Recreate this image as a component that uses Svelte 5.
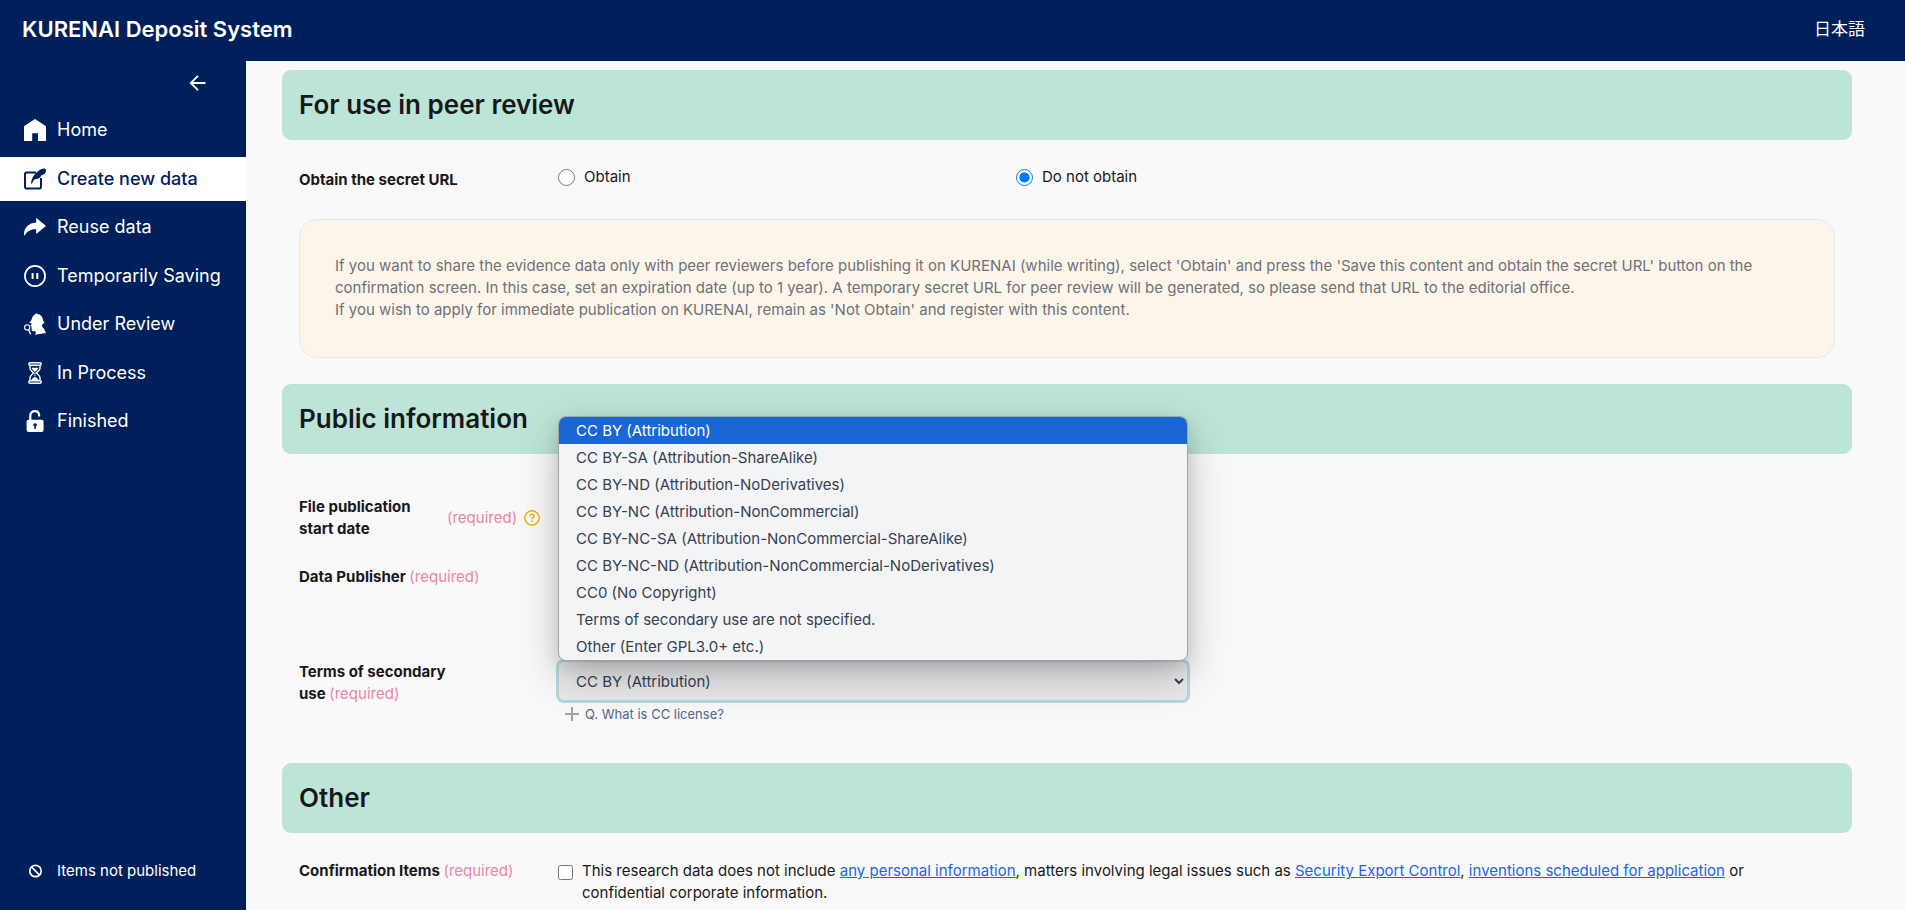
<script>
  const nav = [
    { id: 'home', label: 'Home' },
    { id: 'create', label: 'Create new data', active: true },
    { id: 'reuse', label: 'Reuse data' },
    { id: 'saving', label: 'Temporarily Saving' },
    { id: 'review', label: 'Under Review' },
    { id: 'process', label: 'In Process' },
    { id: 'finished', label: 'Finished' }
  ];

  const licenses = [
    'CC BY (Attribution)',
    'CC BY-SA (Attribution-ShareAlike)',
    'CC BY-ND (Attribution-NoDerivatives)',
    'CC BY-NC (Attribution-NonCommercial)',
    'CC BY-NC-SA (Attribution-NonCommercial-ShareAlike)',
    'CC BY-NC-ND (Attribution-NonCommercial-NoDerivatives)',
    'CC0 (No Copyright)',
    'Terms of secondary use are not specified.',
    'Other (Enter GPL3.0+ etc.)'
  ];

  let license = $state(licenses[0]);
  let listOpen = $state(true);
  let secret = $state('no');

  function choose(value) {
    license = value;
    listOpen = false;
  }
</script>

<header class="topbar">
  <a class="brand" href="#top">KURENAI Deposit System</a>
  <a class="lang" href="#ja" lang="ja">日本語</a>
</header>

<div class="layout">
  <aside class="sidebar">
    <button class="collapse" aria-label="Collapse menu">
      <svg viewBox="0 0 18 18" width="18" height="18" fill="none" stroke="currentColor" stroke-width="1.9"><path d="M16.5 9H2M9 1.8 1.8 9 9 16.2" /></svg>
    </button>
    <nav class="menu">
      {#each nav as item (item.id)}
        <a class="item" class:active={item.active} href={'#' + item.id}>
          <svg class="icon" viewBox="0 0 22 22" width="22" height="22" fill="currentColor" aria-hidden="true">
            {#if item.id === 'home'}
              <path d="M11 0 22 7.3V22H14V14.2H8.2V22H0V7.3Z" />
            {:else if item.id === 'create'}
              <path d="M12 4.5H2.8Q1 4.500 1 6.300V18.700Q1 20.500 2.800 20.500H15.200Q17 20.500 17 18.700V10" fill="none" stroke="currentColor" stroke-width="2" />
              <path d="M7 15.400C7.300 10.500 9.800 6.500 14 3.200 16.500 1.200 17.500.4 20 .4 21.300.4 22 1.200 22 2.300 22 5.200 20.300 6.800 17.600 7.200 16.400 9.700 13.800 11.100 10.300 11.500L7.900 15.400Z" />
            {:else if item.id === 'reuse'}
              <path d="M12.200 1.800 22 10 12.200 17.900V13.300C7.300 13.200 3.200 15 .9 19.300H0C-.2 11.900 4.300 7.200 12.200 6.600Z" />
            {:else if item.id === 'saving'}
              <circle cx="11" cy="11" r="10.100" fill="none" stroke="currentColor" stroke-width="1.700" />
              <path d="M7.600 8h2v6h-2zM12.300 8h2v6h-2z" />
            {:else if item.id === 'review'}
              <path d="M11.300 1.200C11.800.2 12.600.1 13.300.9 16.700 1.200 18.700 3.600 19 7L20.500 10.200 18.600 10.700 17.900 13.400 19.800 15.500 22 20 11 21.800 11.900 19.200 11.200 18.300H8.800C7.700 18.300 7.300 17.400 7.700 16.300L7.500 13.600 6.400 12.800 7.900 10.500 5.200 9.800C6.100 8.700 7.200 7.600 7.800 5.900 8.300 3.400 9.500 1.900 11.300 1.200Z" />
              <circle cx="3.200" cy="14.400" r="2.600" fill="none" stroke="currentColor" stroke-width="1.100" />
              <path d="M4.600 16.700 6.600 21.300" fill="none" stroke="currentColor" stroke-width="1.400" />
            {:else if item.id === 'process'}
              <rect x="4.800" y=".8" width="12.400" height="2.400" rx="1.200" fill="none" stroke="currentColor" stroke-width="1.400" />
              <rect x="4.800" y="18.800" width="12.400" height="2.400" rx="1.200" fill="none" stroke="currentColor" stroke-width="1.400" />
              <path d="M6 3.500V6.300Q6 8 9.700 11 6 14 6 15.700V18.500M16 3.500V6.300Q16 8 12.300 11 16 14 16 15.700V18.500" fill="none" stroke="currentColor" stroke-width="1.400" />
              <path d="M7.600 5.800H14.400Q13.800 7.900 11 10 8.200 7.900 7.600 5.800ZM11 15Q13.600 15.600 14.500 18H7.500Q8.400 15.600 11 15ZM10.400 11h1.200v1.200h-1.200zM10.400 13h1.200v1.200h-1.200z" />
            {:else}
              <path d="M6.300 10V5.600C6.300 2.800 8.200 1.200 10.700 1.200S15.100 2.800 15.100 5.600V6.600" fill="none" stroke="currentColor" stroke-width="2.200" />
              <path fill-rule="evenodd" d="M4.500 9.800H17.700Q19.600 9.800 19.600 11.700V20.100Q19.600 22 17.700 22H4.500Q2.600 22 2.600 20.100V11.700Q2.600 9.800 4.500 9.800ZM11.100 13.200A1.800 1.800 0 0 0 10.300 16.600V19H11.900V16.600A1.800 1.800 0 0 0 11.100 13.200Z" />
            {/if}
          </svg>
          <span>{item.label}</span>
        </a>
      {/each}
    </nav>
    <a class="item unpublished" href="#unpublished">
      <svg class="icon" viewBox="0 0 22 22" width="22" height="22" fill="none" stroke="currentColor" stroke-width="1.700" aria-hidden="true"><circle cx="11.500" cy="11" r="5.700" /><path d="M7.500 7 15.500 15" /></svg>
      <span>Items not published</span>
    </a>
  </aside>

  <main class="content">
    <section class="peer">
      <h2>For use in peer review</h2>
      <div class="row secret">
        <div class="name" id="secret-label">Obtain the secret URL</div>
        <div class="choices" role="radiogroup" aria-labelledby="secret-label">
          <label><input type="radio" name="secret" value="yes" bind:group={secret} />Obtain</label>
          <label><input type="radio" name="secret" value="no" bind:group={secret} />Do not obtain</label>
        </div>
      </div>
      <div class="note">
        <p>If you want to share the evidence data only with peer reviewers before publishing it on KURENAI (while writing), select 'Obtain' and press the 'Save this content and obtain the secret URL' button on the confirmation screen. In this case, set an expiration date (up to 1 year). A temporary secret URL for peer review will be generated, so please send that URL to the editorial office.</p>
        <p>If you wish to apply for immediate publication on KURENAI, remain as 'Not Obtain' and register with this content.</p>
      </div>
    </section>

    <section class="public">
      <h2>Public information</h2>
      <div class="row start">
        <div class="name split">
          <label for="start-now">File publication start date</label>
          <span class="required">(required)</span>
          <button class="help" aria-label="Help">
            <svg viewBox="0 0 16 16" width="16" height="16" fill="none" stroke="currentColor" stroke-width="1.400"><circle cx="8" cy="8" r="7.200" /><path d="M6 6.300C6 5 6.800 4.300 8 4.300S10 5 10 6.200C10 7.500 8 7.700 8 9.300M8 10.600V12" /></svg>
          </button>
        </div>
        <div class="choices"><input id="start-now" type="radio" name="start" checked /></div>
      </div>
      <div class="row publisher">
        <div class="name"><label for="publisher">Data Publisher</label> <span class="required">(required)</span></div>
        <input id="publisher" class="control" type="text" />
      </div>
      <div class="row terms">
        <div class="name"><label for="terms">Terms of secondary<br />use</label> <span class="required">(required)</span></div>
        <div class="field">
          <select id="terms" class="control focused" bind:value={license}>
            {#each licenses as name}
              <option value={name}>{name}</option>
            {/each}
          </select>
          {#if listOpen}
            <ul class="list" role="listbox" aria-label="Terms of secondary use">
              {#each licenses as name}
                <li role="option" aria-selected={name === license}>
                  <button tabindex="-1" onclick={() => choose(name)}>{name}</button>
                </li>
              {/each}
            </ul>
          {/if}
          <button class="faq">
            <svg viewBox="0 0 14 14" width="14" height="14" fill="none" stroke="currentColor" stroke-width="2" aria-hidden="true"><path d="M7 0V14M0 7H14" /></svg>
            Q. What is CC license?
          </button>
        </div>
      </div>
    </section>

    <section class="other">
      <h2>Other</h2>
      <div class="row confirm">
        <div class="name">Confirmation Items <span class="required">(required)</span></div>
        <div class="check">
          <input id="confirm" type="checkbox" />
          <label for="confirm">This research data does not include <a href="#personal">any personal information</a>, matters involving legal issues such as <a href="#export">Security Export Control</a>, <a href="#inventions">inventions scheduled for application</a> or confidential corporate information.</label>
        </div>
      </div>
    </section>
  </main>
</div>

<style>
  :global(body) {
    background: #f9f9f9;
    color: #18181b;
    font-family: Inter, 'Noto Sans CJK JP', sans-serif;
    font-size: 15px;
    line-height: 22px;
  }
  :global(#app) {
    display: flex;
    flex-direction: column;
    min-height: 100vh;
  }
  :global(#app) * {
    box-sizing: border-box;
  }
  a {
    color: inherit;
    text-decoration: none;
  }
  button,
  input,
  select {
    font: inherit;
    color: inherit;
  }
  button {
    border: 0;
    padding: 0;
    background: none;
    cursor: pointer;
  }
  p {
    margin: 0;
  }

  .topbar {
    display: flex;
    align-items: center;
    justify-content: space-between;
    height: 61px;
    padding: 0 40px 4px 22px;
    background: #00205b;
    color: #fff;
  }
  .brand {
    font-size: 22px;
    line-height: 28px;
    font-weight: 600;
  }
  .lang {
    font-size: 17px;
  }

  .layout {
    flex: 1;
    display: flex;
  }
  .sidebar {
    display: flex;
    flex-direction: column;
    flex: none;
    width: 246px;
    padding-bottom: 17px;
    background: #00205b;
    color: #fff;
  }
  .collapse {
    display: flex;
    align-self: flex-end;
    margin: 13px 39px 16px 0;
  }
  .menu {
    display: flex;
    flex-direction: column;
    justify-content: space-between;
    min-height: 335px;
  }
  .item {
    display: flex;
    align-items: center;
    gap: 11px;
    height: 44px;
    padding-left: 24px;
    font-size: 18px;
  }
  .item.active {
    background: #fff;
    color: #00205b;
    font-weight: 500;
  }
  .icon {
    flex: none;
  }
  .unpublished {
    margin-top: auto;
    font-size: 15px;
  }

  .content {
    flex: 1;
    min-width: 0;
    padding: 9px 53px 0 36px;
  }
  h2 {
    margin: 0;
    padding: 18px 17px;
    border-radius: 9px;
    background: #bce5d7;
    font-size: 26px;
    line-height: 34px;
    font-weight: 600;
  }
  .row {
    display: grid;
    grid-template-columns: 259px 1fr;
    padding: 0 17px;
  }
  .name {
    font-weight: 700;
  }
  .required {
    color: #eb85a3;
    font-weight: 400;
  }
  .choices {
    display: grid;
    grid-template-columns: 1fr 1fr;
    align-items: start;
    max-width: 916px;
  }
  .choices label {
    display: flex;
    align-items: center;
    gap: 9px;
  }
  input[type='radio'] {
    width: 17px;
    height: 17px;
    margin: 0;
  }
  .secret {
    padding-top: 26px;
  }
  .secret .name {
    padding-top: 3px;
  }
  .note {
    margin: 28px 17px 0;
    padding: 35px 35px 36px;
    border: 1px solid #e5e7eb;
    border-radius: 18px;
    background: #fbf6e9;
    color: #71717a;
  }

  .public {
    padding-top: 26px;
  }
  .start {
    padding-top: 42px;
  }
  .split {
    display: flex;
    align-items: center;
  }
  .split label {
    width: 148px;
    padding-right: 18px;
  }
  .help {
    display: flex;
    margin-left: 7px;
    color: #eab308;
  }
  .start input {
    margin-top: 3px;
  }
  .publisher {
    align-items: center;
    padding-top: 17px;
  }
  .control {
    width: 100%;
    max-width: 630px;
    height: 40px;
    padding: 0 13px;
    border: 1px solid #d1d5db;
    border-radius: 6px;
    background: #f9fafb;
    color: #374151;
  }
  .terms {
    padding-top: 64px;
  }
  .field {
    position: relative;
    display: flex;
    flex-direction: column;
    align-items: flex-start;
  }
  .focused {
    border-color: #b5d9df;
    background: #e9eaec;
    box-shadow: 0 0 0 2px #b5d9df;
  }
  .list {
    position: absolute;
    bottom: 100%;
    left: 0;
    width: 100%;
    max-width: 630px;
    margin: 0;
    padding: 0;
    overflow: hidden;
    border: 1px solid #a0a3a8;
    border-radius: 8px;
    background: #f3f4f6;
    color: #374151;
    list-style: none;
    box-shadow:
      0 16px 44px rgba(0, 0, 0, 0.22),
      0 6px 16px rgba(0, 0, 0, 0.12);
  }
  .list button {
    display: block;
    width: 100%;
    height: 27px;
    padding: 0 17px;
    text-align: left;
  }
  .list li[aria-selected='true'] {
    background: #1967d2;
    color: #fff;
  }
  .faq {
    display: flex;
    align-items: center;
    gap: 6px;
    margin: 2px 0 0 7px;
    color: #52668f;
    font-size: 13px;
  }
  .faq svg {
    color: #9ca3af;
  }

  .other {
    padding-top: 38px;
  }
  .confirm {
    padding-top: 27px;
  }
  .check {
    display: flex;
    align-items: flex-start;
    gap: 9px;
    padding-right: 36px;
  }
  .check input {
    flex: none;
    width: 15px;
    height: 15px;
    margin: 5px 0 0;
  }
  .check a {
    color: #2563eb;
    text-decoration: underline;
  }
</style>
